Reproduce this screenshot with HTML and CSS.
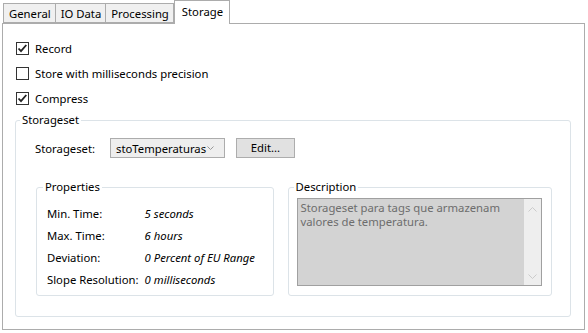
FILE: index.html
```html
<!DOCTYPE html>
<html lang="en">
<head>
  <meta charset="UTF-8">
  <title>Storage</title>
  <link rel="stylesheet" href="styles.css">
</head>
<body>
  <div class="tabs">
    <div class="tab">General</div>
    <div class="tab">IO Data</div>
    <div class="tab">Processing</div>
    <div class="tab active">Storage</div>
  </div>

  <div class="panel">
    <label class="check">
      <span class="box"><svg viewBox="0 0 11 11" width="11" height="11"><path d="M1.5 5.5 L4 8.2 L9.3 2" fill="none" stroke="#222" stroke-width="1.8"/></svg></span>
      Record
    </label>
    <label class="check">
      <span class="box"></span>
      Store with milliseconds precision
    </label>
    <label class="check">
      <span class="box"><svg viewBox="0 0 11 11" width="11" height="11"><path d="M1.5 5.5 L4 8.2 L9.3 2" fill="none" stroke="#222" stroke-width="1.8"/></svg></span>
      Compress
    </label>

    <fieldset class="group storageset">
      <legend>Storageset</legend>
      <div class="set-row">
        <span class="set-label">Storageset:</span>
        <div class="select">
          <span>stoTemperaturas</span>
          <svg viewBox="0 0 7 4" width="7" height="4"><path d="M0.5 0.5 L3.5 3.5 L6.5 0.5" fill="none" stroke="#999" stroke-width="1"/></svg>
        </div>
        <div class="button">Edit...</div>
      </div>

      <div class="columns">
        <fieldset class="group props">
          <legend>Properties</legend>
          <div class="prop-grid">
            <span>Min. Time:</span><span class="val">5 seconds</span>
            <span>Max. Time:</span><span class="val">6 hours</span>
            <span>Deviation:</span><span class="val">0 Percent of EU Range</span>
            <span>Slope Resolution:</span><span class="val">0 milliseconds</span>
          </div>
        </fieldset>

        <fieldset class="group desc">
          <legend>Description</legend>
          <div class="textarea">
            <div class="text">Storageset para tags que armazenam valores de temperatura.</div>
            <div class="scroll">
              <svg viewBox="0 0 9 5" width="9" height="5"><path d="M0.5 4.5 L4.5 0.5 L8.5 4.5" fill="none" stroke="#cbcbcb" stroke-width="1"/></svg>
              <svg viewBox="0 0 9 5" width="9" height="5"><path d="M0.5 0.5 L4.5 4.5 L8.5 0.5" fill="none" stroke="#cbcbcb" stroke-width="1"/></svg>
            </div>
          </div>
        </fieldset>
      </div>
    </fieldset>
  </div>
</body>
</html>
```

FILE: styles.css
```css
* {
  box-sizing: border-box;
}
body {
  margin: 0;
  background: white;
  font-family: 'Noto Sans', 'Open Sans', sans-serif;
  font-size: 11.3px;
  color: #000;
}
.tabs {
  display: flex;
  align-items: flex-end;
  height: 24px;
  padding-left: 3px;
  position: relative;
  z-index: 1;
}
.tab {
  height: 20px;
  padding: 0 4px 0 5px;
  line-height: 19px;
  background: #f0f0f0;
  border: 1px solid #acacac;
  border-right: none;
  margin-bottom: 1px;
}
.tab:nth-child(3) {
  border-right: 1px solid #acacac;
}
.tab.active {
  height: 24px;
  line-height: 21px;
  background: white;
  border-left: 1px solid #acacac;
  border-right: 1px solid #acacac;
  border-bottom: none;
  margin-bottom: 0;
  padding: 0 6px 0 7px;
}
.panel {
  margin: -1px 3px 0 2px;
  height: 307px;
  border: 1px solid #acacac;
  padding: 18px 13px 0 12px;
}
.check {
  display: flex;
  align-items: center;
  gap: 6px;
  height: 13px;
  margin-bottom: 12px;
  margin-left: 1px;
}
.box {
  width: 13px;
  height: 13px;
  border: 1px solid #333;
  background: white;
  display: flex;
  align-items: center;
  justify-content: center;
}
.group {
  border: 1px solid #dce3e8;
  border-radius: 3px;
  margin: 0;
  min-width: 0;
}
.group legend {
  padding: 0 2px;
  line-height: 14px;
}
.storageset {
  margin-top: -4px;
  height: 204px;
  padding: 11px 18px 0 19px;
}
.storageset > legend {
  margin-left: -15px;
}
.set-row {
  display: flex;
  align-items: center;
  height: 20px;
}
.set-label {
  width: 75px;
}
.select {
  width: 115px;
  height: 20px;
  border: 1px solid #acacac;
  background: #eeeeee;
  display: flex;
  align-items: center;
  justify-content: space-between;
  padding: 0 10px 0 5px;
}
.button {
  margin-left: 11px;
  width: 59px;
  height: 20px;
  border: 1px solid #adadad;
  background: #e1e1e1;
  text-align: center;
  line-height: 18px;
}
.columns {
  display: flex;
  gap: 14px;
  margin-top: 22px;
  padding-left: 1px;
}
.props {
  width: 238px;
  height: 116px;
  padding: 8px 10px 0 10px;
}
.props legend {
  margin-left: -4px;
}
.prop-grid {
  display: grid;
  grid-template-columns: auto 1fr;
  column-gap: 6px;
  grid-auto-rows: 22px;
  align-items: center;
  white-space: nowrap;
}
.val {
  font-style: italic;
}
.desc {
  width: 265px;
  height: 116px;
  padding: 4px 9px 0 8px;
}
.desc legend {
  margin-left: -3px;
}
.textarea {
  display: flex;
  height: 88px;
  border: 1px solid #a0a0a0;
  background: #d3d3d3;
}
.text {
  flex: 1;
  padding: 2px 3px;
  line-height: 14px;
  color: #6d6d6d;
}
.scroll {
  width: 17px;
  background: #eeeeee;
  display: flex;
  flex-direction: column;
  justify-content: space-between;
  align-items: center;
  padding: 8px 0 6px;
}
```
